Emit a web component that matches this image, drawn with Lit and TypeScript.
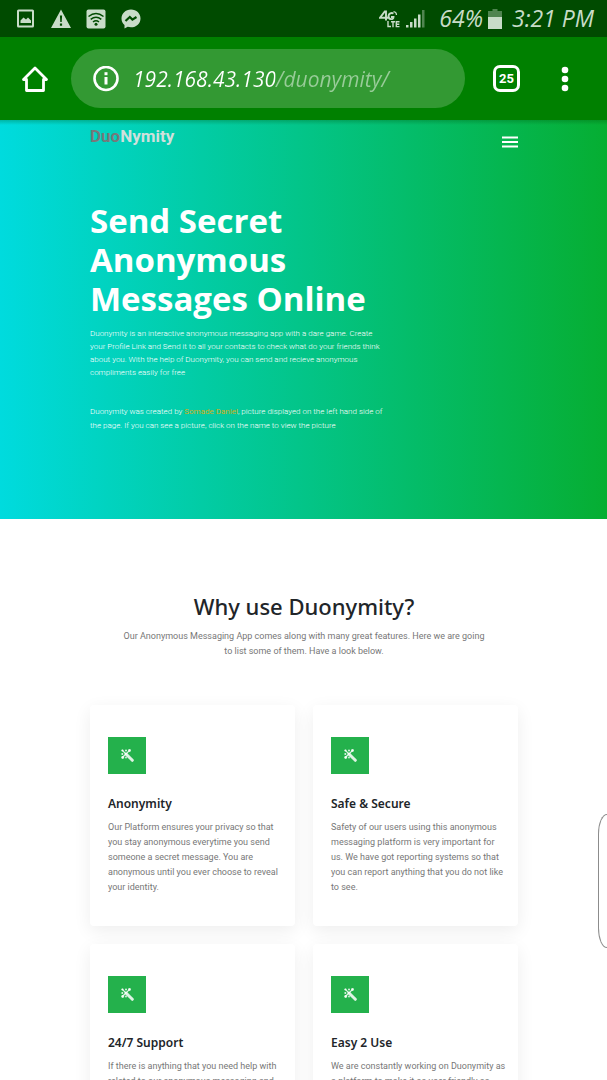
import { LitElement, html, css, svg } from "lit";
import { customElement, property } from "lit/decorators.js";

@customElement("status-bar")
class StatusBar extends LitElement {
  static styles = css`
    :host {
      display: flex;
      align-items: center;
      justify-content: space-between;
      height: 37px;
      padding: 0 13px 0 16px;
      background: #004b00;
      color: #c8dcc8;
    }
    .group {
      display: flex;
      align-items: center;
    }
    .notices {
      gap: 15px;
    }
    .net {
      margin-right: 6px;
    }
    .text {
      font: italic 400 23px/37px "Open Sans", "Noto Sans", sans-serif;
      white-space: nowrap;
    }
    .signal {
      margin-right: 14px;
    }
    .battery {
      margin: 0 10px 0 5px;
    }
    svg {
      display: block;
      fill: currentColor;
    }
  `;
  render() {
    return html`
      <div class="group notices">
        <svg width="20" height="20" viewBox="0 0 20 20" aria-hidden="true">
          <path fill-rule="evenodd" d="M2.5 0.5h14a1.500 1.500 0 0 1 1.500 1.500v15a1.500 1.500 0 0 1-1.500 1.500h-14a1.500 1.500 0 0 1-1.500-1.500v-15a1.500 1.500 0 0 1 1.500-1.500zM3 2.500v14h13v-14z" />
          <path d="M4.500 14v-2.500l3-3 2.500 2 2-2 3 3V14z" />
        </svg>
        <svg width="20" height="20" viewBox="0 0 20 20" aria-hidden="true">
          <path fill-rule="evenodd" d="M10 0.500L20 19H0zM8.900 6.500l.4 6.500h1.400l.4-6.500zM8.900 14.500v2.200h2.200v-2.200z" />
        </svg>
        <svg width="20" height="20" viewBox="0 0 20 20" aria-hidden="true">
          <rect x="0.500" y="0.500" width="19" height="19" rx="2" />
          <g fill="none" stroke="#004b00" stroke-width="1.500">
            <path d="M2.500 7.500Q10 1.500 17.500 7.500" />
            <path d="M4.700 10.300Q10 6 15.300 10.300" />
            <path d="M7 13Q10 10.500 13 13" />
          </g>
          <circle cx="10" cy="15.200" r="1.500" fill="#004b00" />
        </svg>
        <svg width="20" height="20" viewBox="0 0 20 20" aria-hidden="true">
          <path d="M10 .5C4.500.5.500 4.500.500 9.500c0 2.800 1.200 5 3 6.500V19.500l3.200-1.700c1 .3 2.100.5 3.300.5 5.500 0 9.500-4 9.500-8.900S15.500.5 10 .5z" />
          <path d="M4.500 12l4.300-4 2.600 2.600L15.500 8" fill="none" stroke="#004b00" stroke-width="2.200" />
        </svg>
      </div>
      <div class="group">
        <svg class="net" width="21" height="20" viewBox="0 0 21 20" role="img" aria-label="4G LTE">
          <g fill="none" stroke="currentColor" stroke-width="1.900">
            <path d="M7 11.500V2.500h-1.200L1 8.700h8" />
            <path d="M14.500 4.500a3.300 3.300 0 0 0-5 2.500c0 4 5 4 5 1h-2.500" />
            <path d="M14.500 2.500q3 .5 3 3.500" stroke-width="1.200" />
            <path d="M9 12v5.500h3M12 12.800h4M14 12.800v5.500M20.500 12.800h-3.200v4.800h3.200M17.300 15.200h3" stroke-width="1.400" />
          </g>
        </svg>
        <svg class="signal" width="19" height="19" viewBox="0 0 19 19" aria-hidden="true">
          <rect x="0" y="16" width="2.500" height="2.500" />
          <rect x="4" y="13" width="2.500" height="5.500" />
          <rect x="8" y="9.500" width="2.500" height="9" />
          <rect x="12" y="5.500" width="2.500" height="13" />
          <rect x="16" y="1" width="2.500" height="17.500" opacity=".4" />
        </svg>
        <span class="text">64%</span>
        <svg class="battery" width="14" height="20" viewBox="0 0 14 20" aria-hidden="true">
          <path d="M4.500 0h5v2H14v6H0V2h4.500z" opacity=".4" />
          <rect x="0" y="8" width="14" height="12" />
        </svg>
        <span class="text">3:21 PM</span>
      </div>
    `;
  }
}

@customElement("browser-bar")
class BrowserBar extends LitElement {
  static styles = css`
    :host {
      display: flex;
      align-items: center;
      height: 83px;
      padding: 0 27px 0 20px;
      background: #008000;
      color: #fff;
    }
    svg {
      display: block;
    }
    button {
      display: grid;
      place-items: center;
      flex: none;
      height: 40px;
      margin: 0;
      padding: 0;
      border: 0;
      background: none;
      color: inherit;
    }
    .home {
      width: 30px;
      margin-right: 21px;
    }
    .address {
      display: flex;
      align-items: center;
      gap: 14px;
      flex: 1;
      min-width: 0;
      height: 59px;
      box-sizing: border-box;
      padding: 0 20px 0 22px;
      border-radius: 30px;
      background: #339933;
    }
    .info {
      width: 26px;
    }
    .url {
      flex: 1;
      min-width: 0;
      margin: 0;
      padding: 0;
      border: 0;
      outline: 0;
      height: 36px;
      font: italic 400 21px/36px "Open Sans", "Noto Sans", sans-serif;
      background: linear-gradient(90deg, #fff 142px, #99cc99 142px);
      -webkit-background-clip: text;
      background-clip: text;
      color: transparent;
    }
    .tabs {
      width: 27px;
      height: 27px;
      box-sizing: border-box;
      margin-left: 28px;
      border: 3px solid #fff;
      border-radius: 7px;
      font: 700 13px/20px Roboto, sans-serif;
    }
    .more {
      width: 30px;
      margin-left: 30px;
    }
  `;
  render() {
    return html`
      <button class="home" aria-label="Home">
        <svg width="28" height="28" viewBox="0 0 28 28" fill="none" stroke="#fff" stroke-width="2.800" stroke-linejoin="round" stroke-linecap="round">
          <path d="M2.500 14.500L14 3l11.500 11.500H22.500V25.500H5.500V14.500z" />
        </svg>
      </button>
      <div class="address">
        <button class="info" aria-label="Site information">
          <svg width="26" height="26" viewBox="0 0 26 26">
            <circle cx="13" cy="12.500" r="11.500" fill="none" stroke="#fff" stroke-width="2.600" />
            <rect x="11.500" y="11" width="3" height="7.500" fill="#fff" />
            <rect x="11.500" y="6.200" width="3" height="3" fill="#fff" />
          </svg>
        </button>
        <input class="url" type="text" aria-label="Address" value="192.168.43.130/duonymity/" />
      </div>
      <button class="tabs" aria-label="25 open tabs">25</button>
      <button class="more" aria-label="Menu">
        <svg width="8" height="26" viewBox="0 0 8 26" fill="#fff">
          <circle cx="4" cy="4" r="3.300" />
          <circle cx="4" cy="13" r="3.300" />
          <circle cx="4" cy="22" r="3.300" />
        </svg>
      </button>
    `;
  }
}

const wand = svg`
  <path d="M5 5L11.300 11.300" stroke="#fff" stroke-width="3" stroke-linecap="round" opacity=".85" />
  <path d="M5 5L0.800 0.800M5 5L8.800 1.200M5 5L1 8.800" stroke="#fff" stroke-width="1.200" opacity=".85" />
  <g fill="#fff" opacity=".85">
    <circle cx="1.500" cy="1.500" r="1.100" />
    <circle cx="5" cy="1.500" r="1" />
    <circle cx="8.500" cy="1.500" r="1.400" />
    <circle cx="1.300" cy="5" r="1" />
    <circle cx="1.700" cy="8.500" r="1.400" />
    <circle cx="5" cy="8.500" r=".9" />
  </g>`;

@customElement("feature-card")
class FeatureCard extends LitElement {
  @property() heading = "";
  @property() text = "";
  static styles = css`
    :host {
      display: block;
      min-height: 221px;
      box-sizing: border-box;
      padding: 32px 12px 31px 18px;
      border-radius: 4px;
      background: #fff;
      box-shadow: 0 5px 18px rgba(0, 0, 0, 0.07);
    }
    .icon {
      display: grid;
      place-items: center;
      width: 38px;
      height: 37px;
      background: #24b14c;
    }
    h3 {
      margin: 21px 0 7px;
      font: 600 12px/18px "Noto Sans", "Open Sans", sans-serif;
      color: #212529;
    }
    p {
      margin: 0;
      font: 400 9px/15px Roboto, sans-serif;
      color: #777;
    }
  `;
  render() {
    return html`
      <div class="icon">
        <svg width="13" height="13" viewBox="0 0 13 13" aria-hidden="true">${wand}</svg>
      </div>
      <h3>${this.heading}</h3>
      <p>${this.text}</p>
    `;
  }
}

const features = [
  {
    heading: "Anonymity",
    text: "Our Platform ensures your privacy so that you stay anonymous everytime you send someone a secret message. You are anonymous until you ever choose to reveal your identity.",
  },
  {
    heading: "Safe & Secure",
    text: "Safety of our users using this anonymous messaging platform is very important for us. We have got reporting systems so that you can report anything that you do not like to see.",
  },
  {
    heading: "24/7 Support",
    text: "If there is anything that you need help with related to our anonymous messaging and",
  },
  {
    heading: "Easy 2 Use",
    text: "We are constantly working on Duonymity as a platform to make it as user friendly as",
  },
];

@customElement("app-root")
class AppRoot extends LitElement {
  static styles = css`
    :host {
      display: block;
      height: 100vh;
      overflow: hidden;
      background: #fff;
      font-family: Roboto, sans-serif;
    }
    .hero {
      min-height: 399px;
      box-sizing: border-box;
      padding: 3px 89px 0 90px;
      background:
        linear-gradient(rgba(0, 70, 0, 0.25), transparent 5px),
        linear-gradient(90deg, #00dbde, #06ae32);
      color: #fff;
    }
    .nav {
      display: flex;
      justify-content: space-between;
      align-items: flex-start;
    }
    .logo {
      font: 700 17px/26px Roboto, sans-serif;
      color: #d0e0dc;
      text-decoration: none;
    }
    .logo span {
      color: #76797a;
    }
    .menu {
      display: grid;
      place-items: center;
      width: 16px;
      height: 38px;
      margin: 0;
      padding: 0;
      border: 0;
      background: none;
    }
    .pitch {
      max-width: 296px;
      margin-top: 40px;
    }
    h1 {
      margin: 0;
      font: 700 33px/39px "Open Sans", sans-serif;
    }
    .pitch p {
      margin: 9px 0 0;
      font: 300 8px/13px Roboto, sans-serif;
    }
    .pitch .credit {
      margin-top: 26px;
      line-height: 14px;
    }
    .credit a {
      color: #d4ae1c;
      font-weight: 400;
      text-decoration: none;
    }
    .why {
      padding: 71px 89px 0 90px;
    }
    h2 {
      margin: 0;
      text-align: center;
      font: 500 22px/32px "Noto Sans", "Open Sans", sans-serif;
      color: #212529;
    }
    .lead {
      max-width: 366px;
      margin: 7px auto 0;
      text-align: center;
      font: 400 9px/15px Roboto, sans-serif;
      color: #777;
    }
    .cards {
      display: grid;
      grid-template-columns: 1fr 1fr;
      gap: 18px;
      margin-top: 46px;
    }
    .edge {
      position: absolute;
      top: 814px;
      right: 0;
      width: 9px;
      height: 134px;
      box-sizing: border-box;
      border: 1px solid #8c8c8c;
      border-right: 0;
      border-radius: 9px 0 0 9px / 20px 0 0 20px;
      background: #fff;
    }
  `;
  render() {
    return html`
      <status-bar></status-bar>
      <browser-bar></browser-bar>
      <header class="hero">
        <nav class="nav">
          <a class="logo" href="#"><span>Duo</span>Nymity</a>
          <button class="menu" aria-label="Open navigation">
            <svg width="16" height="12" viewBox="0 0 16 12" fill="#fff">
              <rect y="0.500" width="16" height="2" />
              <rect y="5" width="16" height="2" />
              <rect y="9.500" width="16" height="2" />
            </svg>
          </button>
        </nav>
        <div class="pitch">
          <h1>Send Secret Anonymous Messages Online</h1>
          <p>
            Duonymity is an interactive anonymous messaging app with a dare game. Create<br />
            your Profile Link and Send it to all your contacts to check what do your friends think<br />
            about you. With the help of Duonymity, you can send and recieve anonymous<br />
            compliments easily for free
          </p>
          <p class="credit">
            Duonymity was created by <a href="#">Somade Daniel</a>, picture displayed on the left hand side of<br />
            the page. If you can see a picture, click on the name to view the picture
          </p>
        </div>
      </header>
      <main class="why">
        <h2>Why use Duonymity?</h2>
        <p class="lead">
          Our Anonymous Messaging App comes along with many great features. Here we are going to list some of them. Have
          a look below.
        </p>
        <div class="cards">
          ${features.map((f) => html`<feature-card .heading=${f.heading} .text=${f.text}></feature-card>`)}
        </div>
      </main>
      <div class="edge"></div>
    `;
  }
}
